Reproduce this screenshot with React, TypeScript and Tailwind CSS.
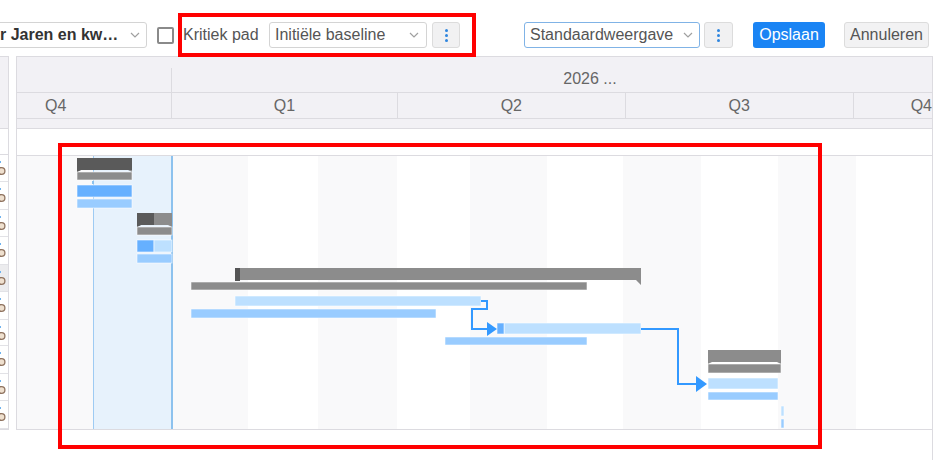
import React from "react";

type Bar = { x: number; y: number; w: number; h: number; c: string };

const bars: Bar[] = [
  // row 1
  { x: 77, y: 171, w: 55, h: 8, c: "#8c8c8c" },
  // row 2
  { x: 77, y: 184, w: 55, h: 12, c: "#66b0ff" },
  { x: 77, y: 198, w: 55, h: 9, c: "#99ccff" },
  // row 3
  { x: 137, y: 226, w: 35, h: 8, c: "#8c8c8c" },
  // row 4
  { x: 137, y: 239, w: 17, h: 12, c: "#66b0ff" },
  { x: 154, y: 239, w: 18, h: 12, c: "#bde0ff" },
  { x: 137, y: 253, w: 35, h: 9, c: "#99ccff" },
  // row 5
  { x: 191, y: 281, w: 396, h: 8, c: "#8c8c8c" },
  // row 6
  { x: 235, y: 295, w: 246, h: 10, c: "#bde0ff" },
  { x: 191, y: 308, w: 245, h: 9, c: "#99ccff" },
  // row 7
  { x: 504, y: 322, w: 137, h: 11, c: "#bde0ff" },
  { x: 497, y: 322, w: 7, h: 11, c: "#66b0ff" },
  { x: 445, y: 336, w: 142, h: 8, c: "#99ccff" },
  // row 8
  { x: 708, y: 363, w: 73, h: 9, c: "#8c8c8c" },
  // row 9
  { x: 708, y: 377, w: 70, h: 11, c: "#bde0ff" },
  { x: 708, y: 391, w: 70, h: 8, c: "#99ccff" },
  // row 10
  { x: 781, y: 405, w: 3, h: 10, c: "#bde0ff" },
  { x: 781, y: 418, w: 3, h: 9, c: "#99ccff" },
];

const stripes = [
  { w: "w-[76px]", bg: "bg-[#f9f9fa]" },
  { w: "w-[80px]", bg: "bg-[#e7f2fc] border-l border-l-[#9ecbf3] border-r-2 border-r-[#8dc2ee]" },
  { w: "w-[75px]", bg: "bg-[#f9f9fa]" },
  { w: "w-[70px]", bg: "bg-white" },
  { w: "w-[79px]", bg: "bg-[#f9f9fa]" },
  { w: "w-[73px]", bg: "bg-white" },
  { w: "w-[77px]", bg: "bg-[#f9f9fa]" },
  { w: "w-[76px]", bg: "bg-white" },
  { w: "w-[78px]", bg: "bg-[#f9f9fa]" },
  { w: "w-[77px]", bg: "bg-white" },
  { w: "w-[78px]", bg: "bg-[#f9f9fa]" },
];

const rowHeights = [27, 28, 27, 28, 27, 28, 27, 28, 27, 28];

function Chevron() {
  return (
    <svg width="10" height="6" viewBox="0 0 10 6" className="shrink-0">
      <polyline points="1,1 5,5 9,1" fill="none" stroke="#a0a0a0" strokeWidth="1.2" />
    </svg>
  );
}

function Kebab({ w }: { w: string }) {
  return (
    <div className={`${w} h-[26px] flex flex-col items-center justify-center gap-[2px] bg-[#f1f1f2] border border-[#dcdcdc] rounded-[3px]`}>
      <span className="w-[3px] h-[3px] rounded-full bg-[#2f86de]" />
      <span className="w-[3px] h-[3px] rounded-full bg-[#2f86de]" />
      <span className="w-[3px] h-[3px] rounded-full bg-[#2f86de]" />
    </div>
  );
}

function Summary({ x, w, y, dark }: { x: number; w: number; y: number; dark?: number }) {
  // summary bar with little notches at both bottom ends
  const r = x + w;
  return (
    <g>
      <polygon
        points={`${x},${y} ${r},${y} ${r},${y + 14} ${r - 4},${y + 12} ${x + 4},${y + 12} ${x},${y + 14}`}
        fill="#8c8c8c"
      />
      {dark ? (
        <polygon
          points={`${x},${y} ${x + dark},${y} ${x + dark},${y + 12} ${x + 4},${y + 12} ${x},${y + 14}`}
          fill="#5a5a5a"
        />
      ) : null}
    </g>
  );
}

function GanttDrawing() {
  return (
    <svg width="915" height="275" className="absolute left-0 top-0">
      <g transform="translate(-17 -155)">
        <Summary x={77} w={55} y={157} dark={55} />
        <rect x={92} y={180} width={2} height={3} fill="#8dc2ee" />
        <Summary x={137} w={35} y={212} dark={17} />
        <rect x={171} y={235} width={2} height={3} fill="#8dc2ee" />
        {/* long summary with pointed right end */}
        <polygon points="235,267 641,267 641,284 636,279 235,279" fill="#8c8c8c" />
        <rect x={235} y={267} width={5} height={13} fill="#555" />
        <Summary x={708} w={73} y={349} />
        {bars.map((b, i) => (
          <rect key={i} x={b.x} y={b.y} width={b.w} height={b.h} fill={b.c} stroke="#ffffff" strokeOpacity={0.7} strokeWidth={0.8} />
        ))}
        <path d="M481 300 H487 V308 H472 V328 H488" fill="none" stroke="#3399ff" strokeWidth="2" />
        <polygon points="487,321 497,328 487,335" fill="#3399ff" />
        <path d="M641 328 H678 V383 H697" fill="none" stroke="#3399ff" strokeWidth="2" />
        <polygon points="696,375 707,383 696,391" fill="#3399ff" />
      </g>
    </svg>
  );
}

function RowGlyph() {
  return (
    <svg width="8" height="27" className="absolute left-0 top-0">
      <rect x={0} y={6} width={1} height={2} fill="#6fb2ee" />
      <circle cx={1.5} cy={16} r={3.4} fill="#efe0cf" stroke="#8f7360" strokeWidth={1.3} />
    </svg>
  );
}

export default function App() {
  return (
    <div className="relative w-[945px] h-[460px] overflow-hidden bg-white font-['Liberation_Sans',Arial,sans-serif] text-[16px] text-[#555]">
      {/* toolbar */}
      <div className="h-[56px] pt-[14px] flex items-center">
        <div className="ml-[-4px] w-[151px] h-[26px] flex items-center justify-between border border-[#d4d4d4] rounded-[3px] pl-[3px] pr-[6px]">
          <span className="font-bold text-[#333] whitespace-nowrap">r Jaren en kw…</span>
          <Chevron />
        </div>
        <div className="ml-[10px] w-[17px] h-[17px] border-2 border-[#8a8a8a] rounded-[2px] bg-white" />
        <span className="ml-[9px] w-[76px] whitespace-nowrap">Kritiek pad</span>
        <div className="ml-[10px] w-[158px] h-[26px] flex items-center justify-between border border-[#d4d4d4] rounded-[3px] pl-[5px] pr-[7px]">
          <span className="whitespace-nowrap">Initiële baseline</span>
          <Chevron />
        </div>
        <div className="ml-[5px]">
          <Kebab w="w-[28px]" />
        </div>
        <div className="ml-[64px] w-[176px] h-[26px] flex items-center justify-between border border-[#80b3e6] rounded-[3px] pl-[5px] pr-[6px]">
          <span className="whitespace-nowrap">Standaardweergave</span>
          <Chevron />
        </div>
        <div className="ml-[4px]">
          <Kebab w="w-[29px]" />
        </div>
        <button className="ml-[20px] w-[72px] h-[26px] rounded-[3px] bg-[#1a84f4] text-white">Opslaan</button>
        <button className="ml-[19px] w-[85px] h-[26px] rounded-[3px] bg-[#f2f2f3] border border-[#dcdcdc] text-[#555]">Annuleren</button>
      </div>

      {/* grid */}
      <div className="flex h-[404px]">
        {/* left panel (mostly scrolled out of view) */}
        <div className="w-[9px] h-[374px] border-t border-r border-b border-[#dcdbe0] flex flex-col">
          <div className="h-[72px] bg-[#f2f1f5] border-b border-[#dcdbe0]" />
          <div className="h-[27px] border-b border-[#dcdbe0]" />
          {rowHeights.map((h, i) => (
            <div
              key={i}
              className={`relative border-b border-[#e2e2e6] ${i === 4 ? "bg-[#ececee]" : "bg-white"}`}
              style={{ height: h }}
            >
              <RowGlyph />
            </div>
          ))}
        </div>

        {/* gantt */}
        <div className="ml-[7px] w-[917px] h-full border-r border-[#dcdbe0]">
          <div className="h-[374px] border-l border-t border-b border-[#dcdbe0] flex flex-col">
            <div className="bg-[#f2f1f5] text-[#666]">
              <div className="h-[36px] flex border-b border-[#dcdbe0]">
                <div className="w-[154px]" />
                <div className="flex-1 mt-[11px] border-l border-[#dcdbe0] flex items-center justify-center pl-[76px] pb-[2px]">
                  2026 ...
                </div>
              </div>
              <div className="h-[26px] flex border-b border-[#dcdbe0] overflow-hidden">
                <div className="w-[154px] flex items-center pl-[28px]">Q4</div>
                <div className="w-[226px] border-l border-[#dcdbe0] flex items-center justify-center">Q1</div>
                <div className="w-[228px] border-l border-[#dcdbe0] flex items-center justify-center">Q2</div>
                <div className="w-[228px] border-l border-[#dcdbe0] flex items-center justify-center">Q3</div>
                <div className="flex-1 border-l border-[#dcdbe0] flex items-center pl-[57px] whitespace-nowrap">Q4</div>
              </div>
              <div className="h-[10px] border-b border-[#dcdbe0]" />
            </div>
            <div className="h-[27px] bg-white border-b border-[#dcdbe0]" />
            <div className="relative flex-1 flex overflow-hidden">
              {stripes.map((s, i) => (
                <div key={i} className={`${s.w} h-full shrink-0 ${s.bg}`} />
              ))}
              <div className="flex-1 bg-white" />
              <GanttDrawing />
            </div>
          </div>
        </div>
      </div>

      {/* annotation rectangles */}
      <div className="absolute left-[178px] top-[13px] w-[298px] h-[44px] border-[4px] border-[#ff0000]" />
      <div className="absolute left-[58px] top-[143px] w-[764px] h-[306px] border-[4px] border-[#ff0000]" />
    </div>
  );
}
